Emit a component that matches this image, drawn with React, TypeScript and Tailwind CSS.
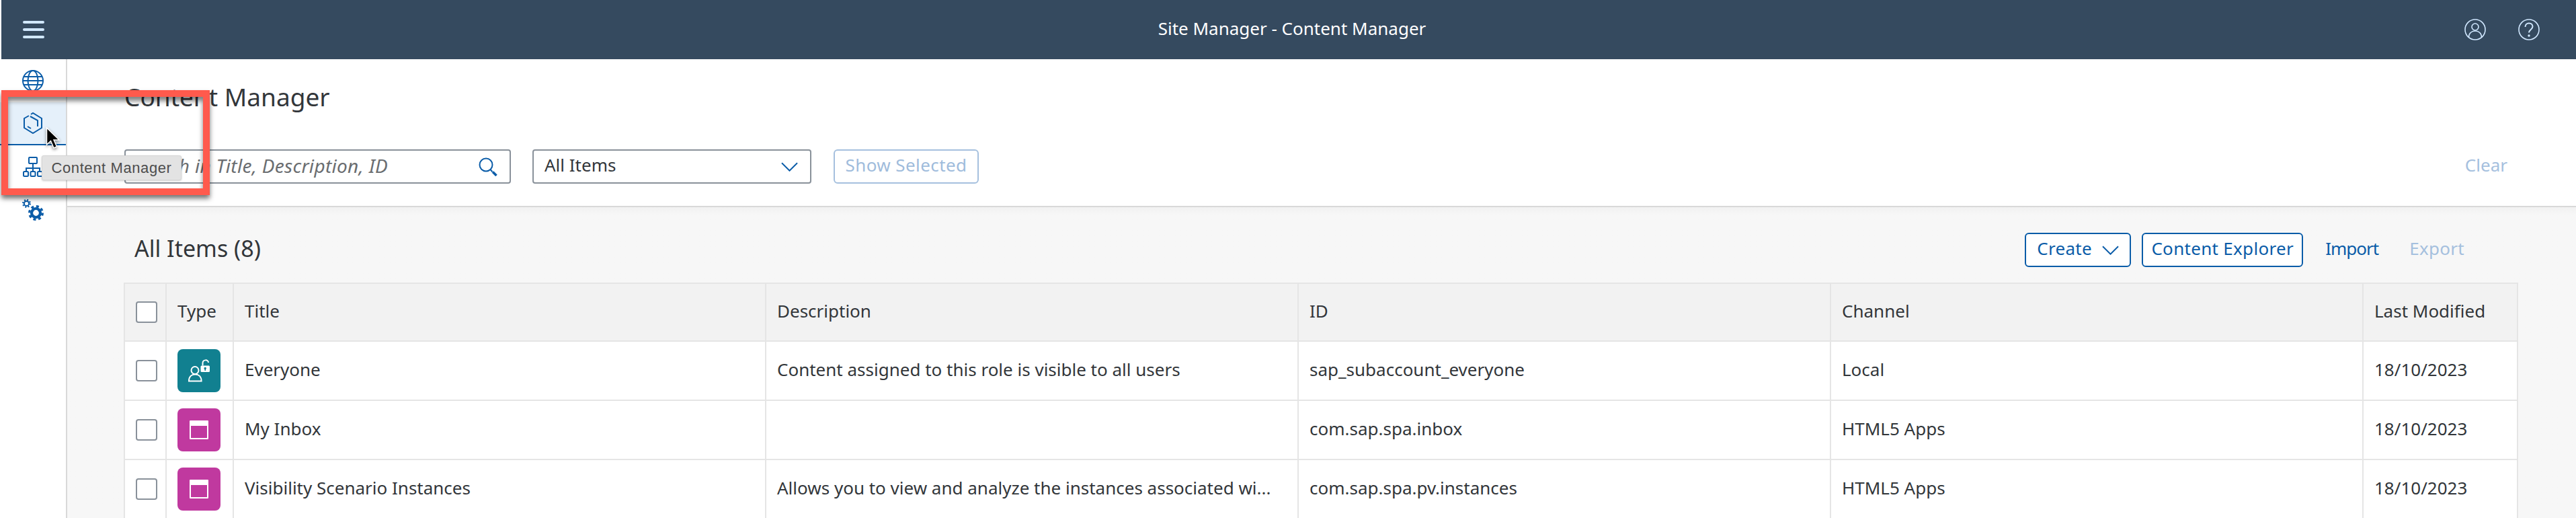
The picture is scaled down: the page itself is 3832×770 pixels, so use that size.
import React from "react";

const Chevron = ({ className }: { className: string }) => (
  <svg viewBox="0 0 26 14" className={className} fill="none" stroke="#0a5ca8" strokeWidth="2">
    <path d="M1 1l12 12L25 1" />
  </svg>
);

const Globe = () => (
  <svg viewBox="0 0 32 32" className="w-8 h-8" fill="none" stroke="#0a5ca8" strokeWidth="2">
    <circle cx="16" cy="16" r="15" />
    <ellipse cx="16" cy="16" rx="7.5" ry="15" />
    <path d="M2.5 10h27M2.5 22h27M1 16h30" />
  </svg>
);

const Cube = () => (
  <svg viewBox="0 0 30 32" className="w-[30px] h-8" fill="none" stroke="#0a5ca8" strokeWidth="2">
    <path d="M9 5L2 9v14l13 8 13-8V9L15 1l-3 2" />
    <path d="M11 6l11 6v9" />
    <path d="M7 21l5 3" />
  </svg>
);

const Org = () => (
  <svg viewBox="0 0 30 30" className="w-[30px] h-[30px]" fill="none" stroke="#0a5ca8" strokeWidth="2">
    <rect x="9" y="1" width="12" height="9" rx="1" />
    <path d="M15 10v7M5 22v-5h20v5M15 17v5" />
    <rect x="1" y="22" width="7" height="7" rx="1.5" />
    <rect x="11.5" y="22" width="7" height="7" rx="1.5" />
    <rect x="22" y="22" width="7" height="7" rx="1.5" />
  </svg>
);

const Gears = () => (
  <svg viewBox="0 0 32 32" className="w-8 h-8" fill="none" stroke="#0a5ca8">
    <circle cx="6.5" cy="6.5" r="3.6" strokeWidth="2" />
    <circle cx="6.5" cy="6.5" r="5.4" strokeWidth="2.2" strokeDasharray="2 2.24" />
    <circle cx="20.5" cy="20.5" r="6.5" strokeWidth="4.2" />
    <circle cx="20.5" cy="20.5" r="9.8" strokeWidth="3.4" strokeDasharray="4 3.7" />
  </svg>
);

const UserIcon = () => (
  <svg viewBox="0 0 32 32" className="w-8 h-8" fill="none" stroke="#d1e8ff" strokeWidth="1.6">
    <circle cx="16" cy="16" r="15" />
    <circle cx="16" cy="12" r="5" />
    <path d="M6.5 27.5c0-6 4-9.500 9.500-9.500s9.500 3.500 9.500 9.500" />
  </svg>
);

const HelpIcon = () => (
  <svg viewBox="0 0 32 32" className="w-8 h-8" fill="none" stroke="#d1e8ff" strokeWidth="1.6">
    <circle cx="16" cy="16" r="15" />
    <path d="M10.500 12c0-3.500 2.500-5.500 5.500-5.500s5.500 2 5.500 5c0 4.500-5.500 4.500-5.500 9" strokeWidth="2" />
    <circle cx="16" cy="25" r="1.700" fill="#d1e8ff" stroke="none" />
  </svg>
);

const Search = () => (
  <svg viewBox="0 0 28 28" className="w-7 h-7" fill="none" stroke="#0a5ca8">
    <circle cx="11" cy="11" r="9.500" strokeWidth="2" />
    <path d="M17.500 18l3 3.500" strokeWidth="2" />
    <path d="M21 21.500l5.500 5.500" strokeWidth="3.500" />
  </svg>
);

const RoleIcon = () => (
  <svg viewBox="0 0 64 64" className="w-16 h-16" fill="none">
    <circle cx="26" cy="31.500" r="5.500" stroke="#fff" strokeWidth="2" />
    <path d="M17 47.500c0-6.500 4-10 9.300-10s9.300 3.500 9.300 10z" stroke="#fff" strokeWidth="2" />
    <rect x="34.500" y="24.500" width="13.500" height="9.500" rx="1.500" fill="#fff" />
    <path d="M37.500 24.500v-3.500c0-6 8.500-6 8.500-1" stroke="#fff" strokeWidth="2" />
    <circle cx="41.200" cy="28.500" r="1.700" fill="#118090" />
    <rect x="40.400" y="29" width="1.600" height="3" fill="#118090" />
  </svg>
);

const WindowIcon = () => (
  <div className="w-7 h-7 border-2 border-white border-t-8 rounded-[1px]" />
);

const Check = () => (
  <div className="w-8 h-8 rounded-[4px] border-2 border-[#89919a] bg-white" />
);

const cols = "grid grid-cols-[62px_100px_792px_792px_792px_792px_230px]";
const cell = "border-r-2 border-b-2 border-[#e5e5e5] flex items-center min-w-0";
const textCell = cell + " pl-4 pb-1 whitespace-nowrap";

const rows = [
  { kind: "role", title: "Everyone", desc: "Content assigned to this role is visible to all users", id: "sap_subaccount_everyone", channel: "Local" },
  { kind: "app", title: "My Inbox", desc: "", id: "com.sap.spa.inbox", channel: "HTML5 Apps" },
  { kind: "app", title: "Visibility Scenario Instances", desc: "Allows you to view and analyze the instances associated wi...", id: "com.sap.spa.pv.instances", channel: "HTML5 Apps" },
];

export default function App() {
  return (
    <div className="relative h-[770px] w-[3832px] overflow-hidden bg-white font-['Noto_Sans',sans-serif] text-[#32363a] text-[26px]">
      <header className="ml-[2px] h-[88px] bg-[#354a5f] flex items-center justify-between text-white">
        <div className="w-[96px] flex justify-center">
          <div className="w-8 flex flex-col gap-[7px]">
            <div className="h-1 rounded-full bg-[#d1e8ff]" />
            <div className="h-1 rounded-full bg-[#d1e8ff]" />
            <div className="h-1 rounded-full bg-[#d1e8ff]" />
          </div>
        </div>
        <div className="ml-[80px] pb-1">Site Manager - Content Manager</div>
        <div className="flex gap-12 pr-[54px]">
          <UserIcon />
          <HelpIcon />
        </div>
      </header>

      <div className="flex h-[682px]">
        <nav className="w-[100px] shrink-0 border-r-2 border-[#d9d9d9] bg-white">
          <div className="h-16 flex items-center justify-center"><Globe /></div>
          <div className="h-16 flex items-center justify-center bg-[#e5f0fa] border-b-2 border-[#0a5ca8]"><Cube /></div>
          <div className="h-16 flex items-center justify-center"><Org /></div>
          <div className="h-16 flex items-center justify-center"><Gears /></div>
        </nav>

        <main className="flex-1 min-w-0 bg-[#f7f7f7]">
          <section className="h-[220px] bg-white border-b-2 border-[#d9d9d9] pl-[85px] pr-[86px] pt-[30px]">
            <h1 className="text-[37px] leading-[52px] h-[52px]">Content Manager</h1>
            <div className="mt-[52px] flex items-stretch h-[51px]">
              <div className="w-[575px] border-2 border-[#89919a] rounded-[4px] flex items-center justify-between pl-[10px] pr-[18px] italic text-[#6a6d70] text-[28px] tracking-[0.3px]">
                <span className="pb-1">Search in Title, Description, ID</span>
                <Search />
              </div>
              <div className="ml-[32px] w-[415px] border-2 border-[#89919a] rounded-[4px] flex items-center justify-between pl-4 pr-[18px]">
                <span className="pb-1">All Items</span>
                <Chevron className="w-[25px] h-[14px]" />
              </div>
              <div className="ml-[33px] w-[216px] border-2 border-[#a5c0de] rounded-[6px] flex items-center justify-center text-[#9fbcdc] pb-1 tracking-[0.4px]">Show Selected</div>
              <div className="ml-auto pr-4 pb-1 flex items-center text-[#a5c0de]">Clear</div>
            </div>
          </section>

          <section className="pl-[84px] pr-[86px] pt-[38px] bg-gradient-to-b from-[#f1f1f1] to-[#f7f7f7] to-[12px]">
            <div className="flex items-center justify-between h-[51px] mb-[23px]">
              <h2 className="pl-4 pb-1 text-[34px]">All Items (8)</h2>
              <div className="flex items-stretch h-[51px] text-[#0a5ca8] mr-[80px] tracking-[0.3px]">
                <div className="w-[158px] bg-white border-2 border-[#0a5ca8] rounded-[6px] flex items-center justify-between px-4">
                  <span className="pb-1">Create</span>
                  <Chevron className="w-[25px] h-[14px]" />
                </div>
                <div className="ml-4 w-[240px] bg-white border-2 border-[#0a5ca8] rounded-[6px] flex items-center justify-center pb-1">Content Explorer</div>
                <div className="ml-[33px] flex items-center pb-1 tracking-[-1px]">Import</div>
                <div className="ml-[46px] flex items-center pb-1 text-[#a5c0de]">Export</div>
              </div>
            </div>

            <div className="border-l-2 border-t-2 border-[#e5e5e5]">
              <div className={cols + " h-[86px] bg-[#f2f2f2]"}>
                <div className={cell + " justify-center pl-1"}><Check /></div>
                <div className={textCell}>Type</div>
                <div className={textCell}>Title</div>
                <div className={textCell}>Description</div>
                <div className={textCell}>ID</div>
                <div className={textCell}>Channel</div>
                <div className={textCell}>Last Modified</div>
              </div>
              {rows.map((r) => (
                <div key={r.id} className={cols + " h-[88px] bg-white"}>
                  <div className={cell + " justify-center pl-1"}><Check /></div>
                  <div className={cell + " pl-4"}>
                    {r.kind === "role" ? (
                      <div className="w-16 h-16 rounded-[8px] bg-[#118090]"><RoleIcon /></div>
                    ) : (
                      <div className="w-16 h-16 rounded-[8px] bg-[#c0399f] flex items-center justify-center"><WindowIcon /></div>
                    )}
                  </div>
                  <div className={textCell}>{r.title}</div>
                  <div className={textCell}>{r.desc}</div>
                  <div className={textCell}>{r.id}</div>
                  <div className={textCell}>{r.channel}</div>
                  <div className={textCell}>18/10/2023</div>
                </div>
              ))}
            </div>
          </section>
        </main>
      </div>

      <div className="absolute left-[2px] top-[134px] w-[310px] h-[156px] border-[10px] border-[#ff5a4d] shadow-[0_5px_7px_rgba(0,0,0,0.55),inset_0_6px_7px_rgba(0,0,0,0.5)]" />

      <div className="absolute left-[62px] top-[231px] w-[208px] h-[37px] rounded-[3px] bg-[#e3e3e3] border border-[#d6d6d6] shadow-[0_1px_3px_rgba(0,0,0,0.2)] flex items-center justify-center font-['Liberation_Sans',sans-serif] text-[22px] tracking-[0.6px] text-[#4d4d4d]">
        Content Manager
      </div>

      <svg viewBox="0 0 22 34" className="absolute left-[68px] top-[189px] w-[22px] h-[34px] drop-shadow-[0_2px_2px_rgba(0,0,0,0.45)]">
        <path d="M1.500 1v25l6-5.500 4.500 10.500 4.500-2-4.500-10h8z" fill="#000" stroke="#fff" strokeWidth="1.500" />
      </svg>
    </div>
  );
}
